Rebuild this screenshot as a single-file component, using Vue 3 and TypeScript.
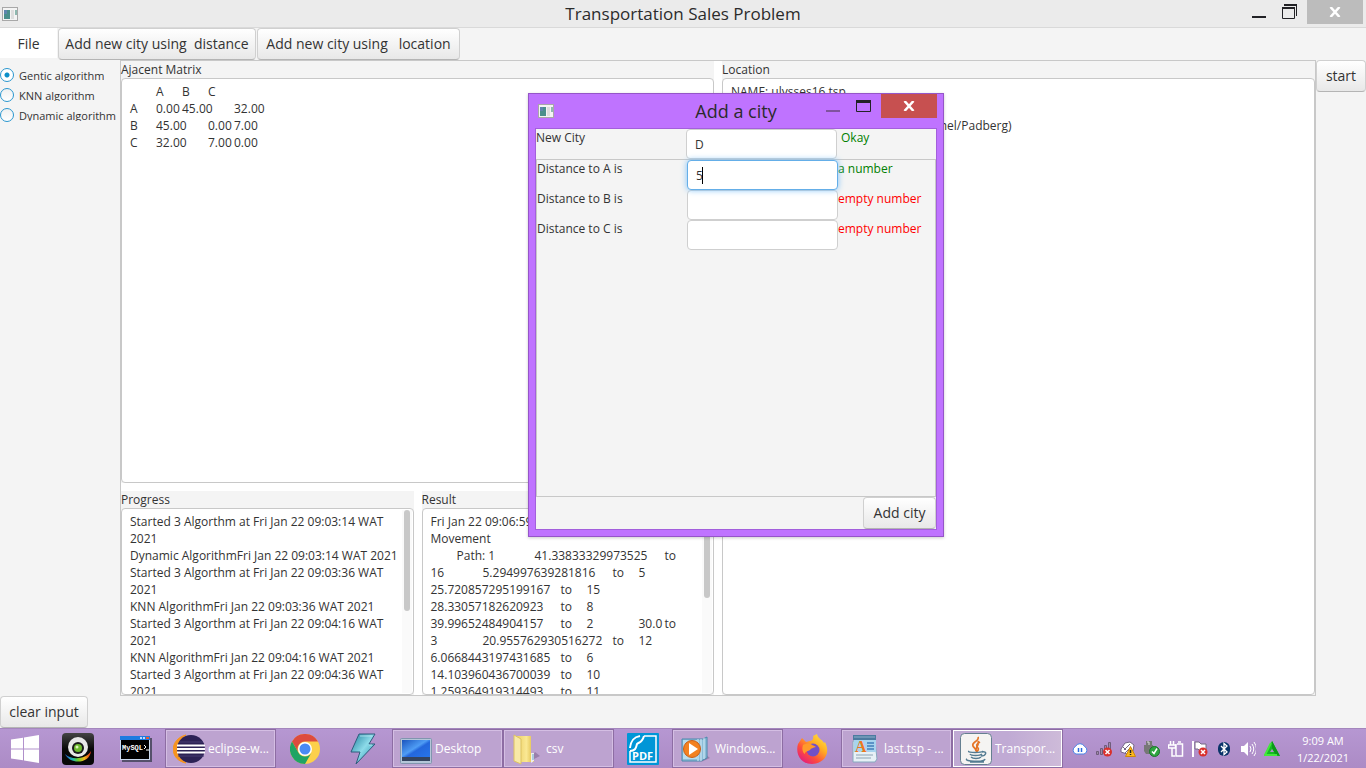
<script setup lang="ts">
import { ref } from 'vue'

type IconName = 'camera' | 'mysql' | 'eclipse' | 'chrome' | 'bolt' | 'desktop' | 'folder' | 'pdf' | 'media' | 'firefox' | 'wordpad' | 'java'
interface Task { icon: IconName; label?: string; active?: boolean }
interface Distance { city: string; value: string; message: string; ok: boolean }

const algorithm = ref('Gentic algorithm')
const algorithms = ['Gentic algorithm', 'KNN algorithm', 'Dynamic algorithm']

const matrix = ref(['\tA\tB\tC', 'A\t0.00\t45.00\t32.00', 'B\t45.00\t0.00\t7.00', 'C\t32.00\t7.00\t0.00'].join('\n'))

const progress = ref([
  'Started 3 Algorthm at Fri Jan 22 09:03:14 WAT', '2021',
  'Dynamic AlgorithmFri Jan 22 09:03:14 WAT 2021',
  'Started 3 Algorthm at Fri Jan 22 09:03:36 WAT', '2021',
  'KNN AlgorithmFri Jan 22 09:03:36 WAT 2021',
  'Started 3 Algorthm at Fri Jan 22 09:04:16 WAT', '2021',
  'KNN AlgorithmFri Jan 22 09:04:16 WAT 2021',
  'Started 3 Algorthm at Fri Jan 22 09:04:36 WAT', '2021',
].join('\n'))

const result = ref([
  'Fri Jan 22 09:06:59 WAT 2021',
  'Movement',
  '\tPath: 1\t\t41.33833329973525\tto',
  '16\t\t5.294997639281816\tto\t5',
  '25.720857295199167\tto\t15',
  '28.33057182620923\tto\t8',
  '39.99652484904157\tto\t2\t\t30.0\tto',
  '3\t\t20.955762930516272\tto\t12',
  '6.0668443197431685\tto\t6',
  '14.103960436700039\tto\t10',
  '1.259364919314493\tto\t11',
].join('\n'))

const location = ref(['NAME: ulysses16.tsp', 'TYPE: TSP', 'COMMENT: Odyssey Ulysses (Groetschel/Padberg)'].join('\n'))

const newCity = ref('D')
const distances = ref<Distance[]>([
  { city: 'A', value: '5', message: 'a number', ok: true },
  { city: 'B', value: '', message: 'empty number', ok: false },
  { city: 'C', value: '', message: 'empty number', ok: false },
])

const tasks: Task[] = [
  { icon: 'camera' }, { icon: 'mysql' },
  { icon: 'eclipse', label: 'eclipse-w...' },
  { icon: 'chrome' }, { icon: 'bolt' },
  { icon: 'desktop', label: 'Desktop' },
  { icon: 'folder', label: 'csv' },
  { icon: 'pdf' },
  { icon: 'media', label: 'Windows...' },
  { icon: 'firefox' },
  { icon: 'wordpad', label: 'last.tsp - ...' },
  { icon: 'java', label: 'Transpor...', active: true },
]
</script>

<template>
  <div class="screen">
    <header class="titlebar">
      <svg class="app-icon" width="16" height="14" viewBox="0 0 16 14">
        <rect x=".5" y=".5" width="15" height="13" fill="#f4f4f4" stroke="#a8a8a8" />
        <rect x="2" y="3" width="6" height="9" fill="#4a8f8c" /><rect x="2" y="3" width="3" height="4" fill="#5f86ae" />
        <rect x="9" y="3" width="3" height="9" fill="#dedede" /><rect x="13" y="3" width="2" height="5" fill="#8fb9b0" />
      </svg>
      <h1>Transportation Sales Problem</h1>
      <div class="controls">
        <button class="ctl" aria-label="Minimize"><svg width="14" height="20" viewBox="0 0 14 20"><path d="M0 17h14" stroke="#222226" stroke-width="2" /></svg></button>
        <button class="ctl" aria-label="Restore"><svg width="15" height="20" viewBox="0 0 15 20"><path d="M2 5h12.500v11M.5 7v11.500h12V7" fill="none" stroke="#222226" /><path d="M2 5h13M0 8h13" stroke="#222226" stroke-width="2" /></svg></button>
        <button class="ctl close gray" aria-label="Close"><svg width="12" height="10" viewBox="0 0 12 10"><path d="M1.500 0l9 10M10.500 0l-9 10" stroke="#fff" stroke-width="2.500" /></svg></button>
      </div>
    </header>

    <nav class="toolbar">
      <button class="menu">File</button>
      <button class="btn wide">{{ 'Add new city using  distance' }}</button>
      <button class="btn wider">{{ 'Add new city using   location' }}</button>
    </nav>

    <main class="body">
      <aside class="algos">
        <label v-for="a in algorithms" :key="a"><input v-model="algorithm" type="radio" name="algorithm" :value="a"><span>{{ a }}</span></label>
      </aside>

      <div class="split">
        <div class="column">
          <section class="pane top">
            <label for="matrix">Ajacent Matrix</label>
            <textarea id="matrix" v-model="matrix" readonly></textarea>
          </section>
          <div class="pair">
            <section class="pane">
              <label for="progress">Progress</label>
              <div class="area"><textarea id="progress" v-model="progress" readonly></textarea><div class="track"><i class="thumb"></i></div></div>
            </section>
            <section class="pane">
              <label for="result">Result</label>
              <div class="area"><textarea id="result" v-model="result" readonly></textarea><div class="track"><i class="thumb long"></i></div></div>
            </section>
          </div>
        </div>
        <section class="pane">
          <label for="location">Location</label>
          <textarea id="location" v-model="location" readonly></textarea>
        </section>
      </div>

      <div class="side"><button class="btn start">start</button></div>
    </main>

    <div class="bottom"><button class="btn clear">clear input</button></div>

    <footer class="taskbar">
      <button class="win" aria-label="Start">
        <svg width="28" height="28" viewBox="0 0 28 28" fill="#fff"><path d="M0 4.500l12-1.700v10.700H0zM13 2.600L28 0v13.500H13zM0 14.500h12v10.700L0 23.500zM13 14.500h15V28l-15-2.600z" /></svg>
      </button>
      <button v-for="t in tasks" :key="t.icon" class="task" :class="{ framed: t.label, active: t.active }" :aria-label="t.label ?? t.icon">
        <svg v-if="t.icon === 'camera'" width="32" height="32" viewBox="0 0 32 32">
          <defs><linearGradient id="cam" x1="0" y1="0" x2="0" y2="1"><stop offset="0" stop-color="#444" /><stop offset=".5" stop-color="#080808" /></linearGradient>
            <linearGradient id="rain"><stop offset="0" stop-color="#2659d8" /><stop offset=".3" stop-color="#22b8ae" /><stop offset=".5" stop-color="#6bce2a" /><stop offset=".75" stop-color="#f5b81a" /><stop offset="1" stop-color="#e02a17" /></linearGradient></defs>
          <rect width="32" height="32" rx="4" fill="url(#cam)" />
          <circle cx="16" cy="14" r="10" fill="#e8e8e8" /><circle cx="16" cy="15" r="6" fill="#1a1a1a" /><circle cx="16" cy="15" r="4" fill="#6cb92e" /><circle cx="15" cy="14" r="1.500" fill="#ddf5bc" />
          <path d="M3 21c5 6 21 6 26-3-1 13-21 14-26 3z" fill="url(#rain)" />
        </svg>
        <svg v-else-if="t.icon === 'mysql'" width="32" height="26" viewBox="0 0 32 26">
          <rect x="2" y="2" width="30" height="24" fill="#55506b" /><rect width="30" height="24" fill="#cddcf0" /><rect width="30" height="4" fill="#1f7be0" />
          <path d="M20 2h2M23 2h2" stroke="#b9dcff" stroke-width="2" /><path d="M26 2h3" stroke="#ea5a2c" stroke-width="2" />
          <rect x="1" y="4" width="28" height="19" fill="#000" /><text x="2" y="14" font-family="Liberation Mono, monospace" font-size="7" font-weight="700" fill="#fff">MySQL</text><path d="M24 9l2 2-2 2M26 14h3" stroke="#fff" fill="none" />
        </svg>
        <svg v-else-if="t.icon === 'eclipse'" width="32" height="30" viewBox="0 0 32 30">
          <path d="M13 1C-4 5-4 26 13 29 2 22 3 7 13 1z" fill="#f7941e" stroke="#f7941e" />
          <circle cx="18" cy="15" r="14" fill="#2c2255" /><path d="M6 8h24M5 22h26" stroke="#463c72" />
          <path d="M4 11.500h28M4 15h28M4 18.500h28" stroke="#fff" stroke-width="2" />
        </svg>
        <svg v-else-if="t.icon === 'chrome'" width="30" height="30" viewBox="0 0 30 30">
          <circle cx="15" cy="15" r="15" fill="#fcd04b" /><path d="M2 7.500A15 15 0 0 1 28 7.500H15a7.500 7.500 0 0 0-6.500 11.200z" fill="#dd4b3e" />
          <path d="M2 7.500l6.500 11.200A7.500 7.500 0 0 0 21.500 18.700L15 30A15 15 0 0 1 2 7.500z" fill="#20a464" />
          <circle cx="15" cy="15" r="7" fill="#fff" /><circle cx="15" cy="15" r="5.500" fill="#4a8af4" />
        </svg>
        <svg v-else-if="t.icon === 'bolt'" width="26" height="32" viewBox="0 0 26 32">
          <defs><linearGradient id="blt" x1="0" y1="0" x2="1" y2="1"><stop offset="0" stop-color="#1d7f9d" /><stop offset=".5" stop-color="#8ddbe9" /><stop offset="1" stop-color="#178aa6" /></linearGradient></defs>
          <path d="M9 1h16l-6 10h6L6 31l4-12H1z" fill="url(#blt)" stroke="#2f5c7c" stroke-linejoin="round" /><path d="M10 3h12M19 12h3" fill="none" stroke="#c3f0f5" opacity=".7" />
        </svg>
        <svg v-else-if="t.icon === 'desktop'" width="32" height="26" viewBox="0 0 32 26" class="low">
          <defs><linearGradient id="dsk" x1="0" y1="0" x2="1" y2="1"><stop offset="0" stop-color="#1a54bd" /><stop offset=".45" stop-color="#4f9df5" /><stop offset=".55" stop-color="#2467dc" /><stop offset="1" stop-color="#2776eb" /></linearGradient></defs>
          <rect width="31" height="25" x=".5" y=".5" rx="1" fill="#b4c6d8" stroke="#8195ae" /><rect x="2" y="2" width="28" height="18" fill="url(#dsk)" /><rect x="2" y="19" width="28" height="4" fill="#34445f" />
        </svg>
        <svg v-else-if="t.icon === 'folder'" width="28" height="32" viewBox="0 0 28 32">
          <defs><linearGradient id="fld"><stop offset="0" stop-color="#eacb5b" /><stop offset=".6" stop-color="#fae894" /><stop offset="1" stop-color="#dcb83f" /></linearGradient></defs>
          <path d="M15 29l12-6-5-4z" fill="#765e88" opacity=".5" /><path d="M2 3h16v20l3 3v3H7z" fill="url(#fld)" /><path d="M1 2l7 4v25l-7-3z" fill="#f8e9a7" stroke="#dcc263" /><path d="M18 20h3v8l-3 2z" fill="#eee" /><path d="M20 21v6" stroke="#6da7c8" />
        </svg>
        <svg v-else-if="t.icon === 'pdf'" width="32" height="32" viewBox="0 0 32 32">
          <rect width="32" height="32" rx="1" fill="#0096d7" /><path d="M17 3h12v26H3V18" fill="none" stroke="#fff" stroke-width="1.500" /><path d="M3 18c6 0 6-4 7-7 2-2 5-1 7-8M3 15C4 7 7 4 13 3" fill="none" stroke="#fff" stroke-width="2" />
          <text x="5" y="27" font-family="Open Sans, sans-serif" font-size="11" font-weight="700" fill="#fff">PDF</text>
        </svg>
        <svg v-else-if="t.icon === 'media'" width="30" height="28" viewBox="0 0 30 28">
          <path d="M20 27l9-4-5-4z" fill="#765e88" opacity=".5" /><path d="M1 4h21l4-2v21l-6 3H1z" fill="#8dbdd8" stroke="#4b88ac" /><path d="M17 4v22M20 4v22M23 3v21" stroke="#d5eefa" /><rect x="2" y="5" width="14" height="19" fill="#b8ddee" />
          <circle cx="11" cy="14" r="8.500" fill="#f38120" stroke="#ca5f18" /><path d="M8 8l9 6-9 6z" fill="#fff" />
        </svg>
        <svg v-else-if="t.icon === 'firefox'" width="32" height="32" viewBox="0 0 32 32">
          <defs><linearGradient id="ffx" x1="1" y1="0" x2=".2" y2="1"><stop offset="0" stop-color="#fff04a" /><stop offset=".4" stop-color="#ffad22" /><stop offset=".7" stop-color="#ff4e3c" /><stop offset="1" stop-color="#e01982" /></linearGradient></defs>
          <path d="M6 5l4 4 4-1c2 0 4-2 3-5l4-2c1 5 5 5 7 9l1-1c7 14-4 22-13 22C5 31-1 21 2 11l4-6z" fill="url(#ffx)" /><circle cx="17" cy="17" r="6.500" fill="#7350c8" /><path d="M7 12c4-2 7-2 9 0 2 1 3 1 4 2-3 1-5 1-6 3-3 2-5 1-5 4-3-2-3-6-2-9z" fill="#ff9a2b" />
        </svg>
        <svg v-else-if="t.icon === 'wordpad'" width="26" height="30" viewBox="0 0 26 30">
          <path d="M1 7h22l2 18-2 3H1z" fill="#e7f1f6" stroke="#86a9bf" /><path d="M2 6h22v12H2z" fill="#a8d4ee" /><path d="M1 1h23v5H1z" fill="#4c7ba0" /><path d="M2 3h21" stroke="#8db2cb" />
          <text x="3" y="18" font-family="Liberation Serif, serif" font-weight="700" font-size="16" fill="#ed781c">A</text><path d="M15 9h7M15 12h7M15 15h7" stroke="#417dbb" stroke-width="1.500" /><path d="M4 21h17M4 24h15" stroke="#8ea3b4" />
        </svg>
        <svg v-else width="32" height="32" viewBox="0 0 32 32">
          <rect x=".5" y=".5" width="31" height="31" rx="4" fill="#f5f4f2" stroke="#657f90" />
          <path d="M18 4c2 4-7 5-5 9 1 2 3 3 3 5-1-4 4-6 2-10M20 9c-4 2-4 4-2 6 1 1 0 3-2 4" fill="none" stroke="#e57426" stroke-width="1.700" /><path d="M9 18c-3 2 15 2 13 0M10 21c1 2 10 2 12 0M11 24c2 2 8 2 10 0M22 19c6-1 4 4-1 4M7 26c-4 2 17 4 18 0M10 29h14" fill="none" stroke="#537b91" stroke-width="1.500" />
        </svg>
        <span v-if="t.label">{{ t.label }}</span>
      </button>

      <div class="tray">
        <svg viewBox="0 0 16 16"><path d="M4 13a4 4 0 0 1-.5-7.500 5 5 0 0 1 9 0A4 4 0 0 1 12 13z" fill="#fff" stroke="#4d86e8" /><path d="M6.500 7v4M9.500 7v4" stroke="#2a6be0" stroke-width="1.500" /></svg>
        <svg viewBox="0 0 16 16"><path d="M.5 10.500h2v3h-2zM4.500 7.500h2v6h-2zM8.500 4.500h2v9h-2zM12.500 1.500h2v12h-2z" fill="#9f8aa9" stroke="#6f5d7b" /><circle cx="11.500" cy="11" r="4.500" fill="#d9302c" /><path d="M9.500 9l4 4M13.500 9l-4 4" stroke="#fff" stroke-width="1.500" /></svg>
        <svg viewBox="0 0 16 16"><path d="M1 8l4-6 5-1 4 3-1 6-6 3-6-2z" fill="#fff" stroke="#766787" /><path d="M4 9l6-6M5 12l6-6M3 6l3 3" stroke="#766787" fill="none" /><path d="M10.500 5.500l5 10h-10z" fill="#fbb91c" stroke="#ce8708" /><path d="M10.500 9v3M10.500 13v1" stroke="#222" stroke-width="1.500" /></svg>
        <svg viewBox="0 0 16 16"><path d="M2 0h6v4H2zM0 4h9v6l-2 3H2l-2-3z" fill="#777" /><path d="M3 1h2v3" stroke="#ddd" fill="none" /><circle cx="10.500" cy="10.500" r="5" fill="#2fa641" stroke="#1b752a" /><path d="M8 10.500l2 2 3-5" fill="none" stroke="#fff" stroke-width="1.500" /></svg>
        <svg viewBox="0 0 16 16"><path d="M2.500 0v4M5.500 0v4M.5 4h7v3h-7zM4 7v8h3M9 3h5.500v12H8V3M10 1h3" fill="none" stroke="#fff" stroke-width="1.500" /></svg>
        <svg viewBox="0 0 16 16"><path d="M1 0v16" stroke="#fff" stroke-width="2" /><path d="M3 1h4l2 2h5v7H8L6 8H3z" fill="#fff" stroke="#776a84" /><circle cx="11" cy="11" r="4.500" fill="#d9302c" /><path d="M9 9l4 4M13 9l-4 4" stroke="#fff" stroke-width="1.500" /></svg>
        <svg viewBox="0 0 16 16"><rect x="2" y="1" width="12" height="14" rx="6" fill="#093469" /><path d="M5 5l6 6-3 2.500v-11L11 5l-6 6" fill="none" stroke="#fff" stroke-width="1.300" /></svg>
        <svg viewBox="0 0 16 16"><path d="M1 5h3l4-4v14l-4-4H1z" fill="#fff" /><path d="M10 5q2 3 0 6M12 3q3.500 5 0 10M14 1q5 7 0 14" fill="none" stroke="#fff" /></svg>
        <svg viewBox="0 0 16 16"><path d="M8 0l8 15H0z" fill="#16ba24" /><path d="M8 0l8 15-5-2-3-6z" fill="#0a9a18" /><path d="M8 8l2 3H6z" fill="#b092c8" /><path d="M7 2L1 14h12" fill="none" stroke="#42e83b" stroke-width="2" /></svg>
      </div>
      <time class="clock"><span>9:09 AM</span><span>1/22/2021</span></time>
    </footer>

    <div class="dialog" role="dialog" aria-labelledby="dialog-title">
      <div class="dialog-bar">
        <svg class="app-icon" width="16" height="14" viewBox="0 0 16 14">
          <rect x=".5" y=".5" width="15" height="13" fill="#f4f4f4" stroke="#a8a8a8" />
          <rect x="2" y="3" width="6" height="9" fill="#4a8f8c" /><rect x="2" y="3" width="3" height="4" fill="#5f86ae" />
          <rect x="9" y="3" width="3" height="9" fill="#dedede" /><rect x="13" y="3" width="2" height="5" fill="#8fb9b0" />
        </svg>
        <h2 id="dialog-title">Add a city</h2>
        <div class="controls">
          <button class="ctl" aria-label="Minimize dialog"><svg width="14" height="20" viewBox="0 0 14 20"><path d="M0 17h14" stroke="#80529f" stroke-width="2" /></svg></button>
          <button class="ctl" aria-label="Maximize dialog"><svg width="15" height="20" viewBox="0 0 15 20"><path d="M.5 6v11.500h14V6" fill="none" stroke="#222226" /><path d="M0 7.500h15" stroke="#222226" stroke-width="3" /></svg></button>
          <button class="ctl close" aria-label="Close dialog"><svg width="12" height="10" viewBox="0 0 12 10"><path d="M1.500 0l9 10M10.500 0l-9 10" stroke="#fff" stroke-width="2.500" /></svg></button>
        </div>
      </div>
      <form class="dialog-body" @submit.prevent>
        <div class="field"><label for="city">New City</label><span class="box"><input id="city" v-model="newCity" type="text"></span><output class="ok gap">Okay</output></div>
        <div class="rows">
          <div v-for="(d, i) in distances" :key="d.city" class="field">
            <label :for="'d' + d.city">Distance to {{ d.city }} is</label>
            <span class="box" :class="{ focused: i === 0 }"><input :id="'d' + d.city" v-model="d.value" type="text"><i v-if="i === 0" class="caret"></i></span>
            <output :class="d.ok ? 'ok' : 'bad'">{{ d.message }}</output>
          </div>
        </div>
        <div class="actions"><button class="btn add">Add city</button></div>
      </form>
    </div>
  </div>
</template>

<style>
body { margin: 0; }
</style>

<style scoped>
* { box-sizing: border-box; }
.screen { position: relative; min-height: 100vh; display: flex; flex-direction: column; overflow: hidden; background: #f4f4f4; color: #333; font: 12px/17px "Open Sans", "Noto Sans", sans-serif; }
button, input, textarea { font: inherit; color: inherit; margin: 0; }
button { padding: 0; border: 0; background: none; }
svg { display: block; flex: none; }
.titlebar { position: relative; display: flex; align-items: center; justify-content: center; height: 28px; flex: none; background: #ebebeb; border-bottom: 1px solid #d9d9d9; }
h1, h2 { margin: 0; font-weight: 400; color: #2b2b2b; }
h1 { font-size: 17px; line-height: 28px; }
h2 { font-size: 18px; line-height: 34px; }
.app-icon { position: absolute; left: 2px; top: 7px; }
.controls { position: absolute; right: 0; top: 0; display: flex; padding-right: 3px; }
.ctl { width: 31px; height: 24px; display: flex; justify-content: center; }
.ctl.close { width: 56px; margin-left: 2px; align-items: center; background: #c75050; }
.ctl.gray { background: #bcbcbc; }
.toolbar { display: flex; gap: 1px; height: 32px; flex: none; }
.menu { width: 57px; height: 30px; background: #fff; font-size: 14px; }
.btn { height: 32px; font-size: 14px; line-height: 20px; border: 1px solid #d0d0d0; border-bottom-color: #b4b4b4; border-radius: 4px; background: linear-gradient(#fff, #e8e8e8); white-space: pre; }
.wide { width: 198px; }
.wider { width: 203px; }
.body { flex: 1; display: flex; min-height: 0; }
.algos { width: 120px; padding-top: 5px; font-size: 11px; }
.algos label { display: flex; align-items: center; gap: 5px; height: 20px; white-space: nowrap; }
.algos input { appearance: none; width: 14px; height: 14px; flex: none; border: 1px solid #2a97cf; border-radius: 50%; background: linear-gradient(#f0f0f0, #fff); }
.algos input:checked { background: radial-gradient(circle, #0c8fc9 0 2px, #fff 3px); }
.algos span { height: 12px; line-height: 13px; overflow: hidden; }
.split { flex: 1; display: grid; grid-template-columns: minmax(0, 1fr) minmax(0, 1fr); gap: 8px; border: 1px solid #c8c8c8; background: #fff; min-width: 0; }
.column { display: flex; flex-direction: column; gap: 8px; min-height: 0; }
.pair { flex: 204; min-height: 0; display: grid; grid-template-columns: minmax(0, 1fr) minmax(0, 1fr); gap: 8px; }
.pane { display: flex; flex-direction: column; min-height: 0; background: #f4f4f4; }
.pane.top { flex: 422; }
.area { position: relative; flex: 1; display: flex; min-height: 0; }
textarea { display: block; flex: 1; width: 100%; min-height: 0; resize: none; outline: 0; overflow: hidden; border: 1px solid #c8c8c8; border-radius: 4px; background: #fff; padding: 4px 8px 0; tab-size: 26px; white-space: pre; }
.track { position: absolute; right: 2px; top: 2px; bottom: 2px; width: 10px; background: #fafafa; display: flex; justify-content: center; }
.thumb { width: 6px; height: 101px; border-radius: 3px; background: #c8c8c8; }
.thumb.long { height: 88px; }
.side { width: 50px; }
.side .btn { width: 50px; }
.bottom { height: 32px; flex: none; }
.clear { width: 88px; }
.taskbar { display: flex; height: 40px; flex: none; background: linear-gradient(#b697d2, #ac8bc5); border-top: 1px solid #a486bd; color: #fff; }
.win { width: 49px; display: flex; align-items: center; justify-content: center; }
.task { width: 58px; display: flex; align-items: center; justify-content: center; }
.task.framed { width: 111px; justify-content: flex-start; gap: 3px; padding-left: 7px; border: 1px solid #8d6da3; box-shadow: inset 0 0 0 1px #d4bee3; background: #bda3d0; font-size: 12px; white-space: nowrap; }
.task.framed svg { width: 32px; }
.task .low { margin-top: 4px; }
.task.active { background: linear-gradient(90deg, #c0aad4 50%, #cebbd9); box-shadow: inset 0 0 0 1px #fff; }
.tray { display: flex; align-items: center; gap: 8px; padding-left: 9px; margin-left: auto; }
.tray svg { width: 16px; height: 16px; }
.clock { width: 86px; display: flex; flex-direction: column; align-items: center; justify-content: center; font-size: 11px; line-height: 17px; }
.dialog { position: absolute; left: 528px; top: 93px; width: 416px; height: 444px; display: flex; flex-direction: column; padding: 0 6px 6px; border: 1px solid #9556c8; background: #bf73ff; box-shadow: 0 1px 3px #0003; }
.dialog-bar { height: 34px; flex: none; display: flex; justify-content: center; align-items: flex-end; }
.dialog-bar .app-icon { left: 9px; top: 10px; }
.dialog-bar .controls { padding-right: 6px; }
.dialog-body { flex: 1; display: flex; flex-direction: column; border: 1px solid #a35fdc; background: #f4f4f4; }
.field { display: grid; grid-template-columns: 150px 151px 1fr; height: 30px; }
.box { position: relative; display: flex; }
.box input { width: 100%; height: 30px; border: 1px solid #cfcfcf; border-radius: 4px; outline: 0; background: #fff; padding: 0 8px; }
.box.focused { z-index: 1; }
.box.focused input { border-color: #64aee8; box-shadow: 0 0 6px #7cc0f8; }
.caret { position: absolute; left: 15px; top: 7px; width: 1px; height: 17px; background: #000; }
.rows { flex: 1; border: 1px solid #c8c8c8; }
.ok { color: #008000; }
.bad { color: #f00; }
.gap { padding-left: 4px; }
.actions { display: flex; justify-content: flex-end; }
.add { width: 73px; }
</style>
